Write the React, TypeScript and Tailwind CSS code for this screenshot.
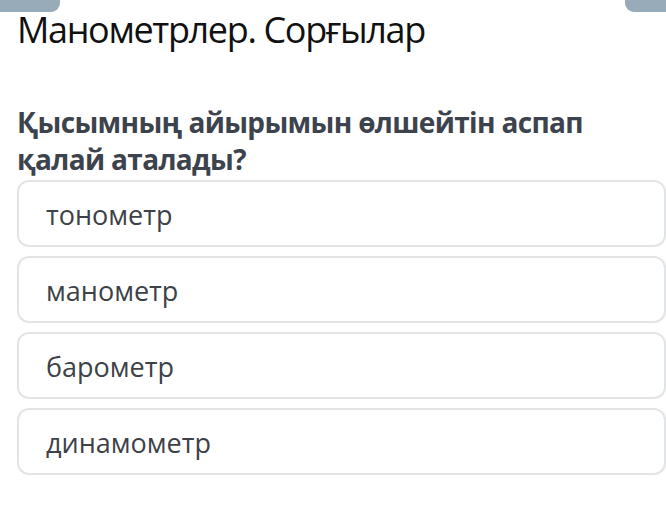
import React from 'react';

const options = ['тонометр', 'манометр', 'барометр', 'динамометр'];

export default function App() {
  return (
    <div className="w-[666px] h-[526px] overflow-hidden bg-white font-['Open_Sans',sans-serif]">
      {/* top tabs peeking in */}
      <div className="flex justify-between h-[12px]">
        <div className="w-[60px] h-full bg-[#98abb8] rounded-br-[9px]" />
        <div className="w-[41px] h-full bg-[#98abb8] rounded-bl-[9px]" />
      </div>

      <div className="pl-[17px]">
        <h1 className="text-[36px] leading-[40px] text-[#111] tracking-[-1.35px] mt-[-2px]">
          Манометрлер. Сорғылар
        </h1>

        <p className="mt-[54px] text-[28px] leading-[37px] font-bold text-[#3c434c] tracking-[-0.65px]">
          Қысымның айырымын өлшейтін аспап
          <br />
          қалай аталады?
        </p>

        <div className="mt-[2px] flex flex-col gap-[9px]">
          {options.map((o) => (
            <div
              key={o}
              className="w-[649px] h-[67px] border-2 border-[#e3e4e6] rounded-[12px] flex items-center pl-[27px] pt-[3px] text-[27px] text-[#3d4148]"
            >
              {o}
            </div>
          ))}
        </div>
      </div>
    </div>
  );
}
